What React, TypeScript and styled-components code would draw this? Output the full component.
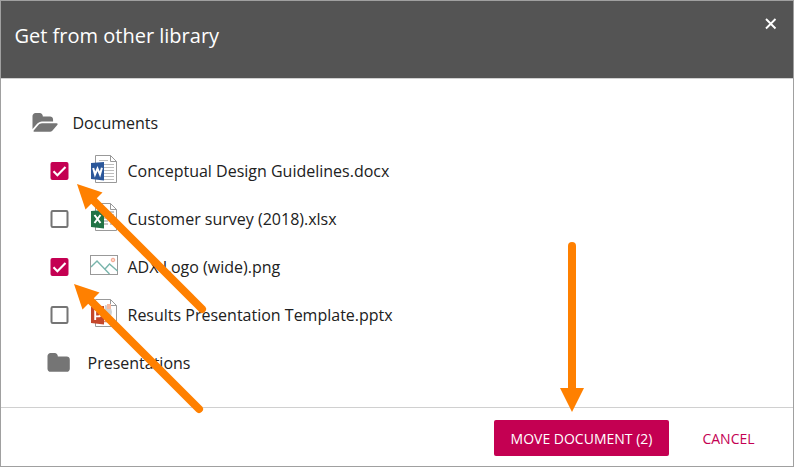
import React from "react";
import styled, { createGlobalStyle } from "styled-components";

const GlobalStyle = createGlobalStyle`
  * { box-sizing: border-box; }
  body { margin: 0; background: #fff; }
`;

const Dialog = styled.div`
  position: relative;
  display: flex;
  flex-direction: column;
  width: 794px;
  height: 467px;
  border: 1px solid #a0a0a0;
  background: #fff;
  color: #212121;
  font-family: "Open Sans", sans-serif;
  font-size: 16px;
  overflow: hidden;
`;

const Header = styled.header`
  display: flex;
  justify-content: space-between;
  align-items: flex-start;
  height: 78px;
  flex: none;
  padding: 16px 16px 0 13.5px;
  background: #545454;
  border-bottom: 1px solid #d0d0d0;
  color: #fff;
`;

const Title = styled.h1`
  margin: 5px 0 0;
  font-size: 20px;
  font-weight: 400;
  line-height: 28px;
`;

const CloseButton = styled.button`
  display: flex;
  margin: 0;
  padding: 0;
  border: 0;
  background: none;
  color: inherit;
`;

const Tree = styled.main`
  flex: 1;
  padding-top: 20px;
`;

const Row = styled.div<{ $indent: number }>`
  display: flex;
  align-items: center;
  height: 48px;
  padding-left: ${(p) => p.$indent}px;
  white-space: nowrap;
`;

const IconSlot = styled.span<{ $width: number; $lift?: number }>`
  display: flex;
  flex: none;
  width: ${(p) => p.$width}px;
  padding-bottom: ${(p) => (p.$lift ?? 0) * 2}px;
`;

const Label = styled.span`
  line-height: 24px;
`;

const Footer = styled.footer`
  display: flex;
  align-items: flex-start;
  justify-content: flex-end;
  gap: 17px;
  height: 59px;
  flex: none;
  padding: 12px 22px 0 0;
  border-top: 1px solid #d0d0d0;
`;

const Button = styled.button<{ $primary?: boolean }>`
  height: 36px;
  width: ${(p) => (p.$primary ? 175 : 85)}px;
  padding: 1px 0 0;
  border: 0;
  border-radius: 2px;
  background: ${(p) => (p.$primary ? "#c40052" : "transparent")};
  color: ${(p) => (p.$primary ? "#fff" : "#c40052")};
  font: 400 14px "Open Sans", sans-serif;
  white-space: nowrap;
`;

const Annotations = styled.svg`
  position: absolute;
  left: -1px;
  top: -1px;
  pointer-events: none;
`;

const FolderOpen = () => (
  <svg width="27" height="20" viewBox="-37 128 2016 1493" fill="#757575">
    <path d="M1879 952q0 31-31 66l-336 396q-43 51-120.500 86.500t-143.500 35.500h-1088q-34 0-60.500-13t-26.500-43q0-31 31-66l336-396q43-51 120.500-86.500t143.500-35.500h1088q34 0 60.500 13t26.500 43zm-343-344v160h-832q-94 0-197 47.500t-164 119.500l-337 396-5 6q0-4-.5-12.500t-.5-12.500v-960q0-92 66-158t158-66h320q92 0 158 66t66 158v32h544q92 0 158 66t66 158z" />
  </svg>
);

const Folder = () => (
  <svg width="24" height="20" viewBox="-37 128 1792 1493" fill="#757575">
    <path d="M1664 608v704q0 92-66 158t-158 66h-1216q-92 0-158-66t-66-158v-960q0-92 66-158t158-66h320q92 0 158 66t66 158v32h672q92 0 158 66t66 158z" />
  </svg>
);

const Checkbox = ({ checked }: { checked: boolean }) => (
  <svg width="19" height="18" viewBox="-.5 0 19 18" fill="none">
    {checked ? (
      <>
        <rect width="18" height="18" rx="2" fill="#c40052" />
        <path d="M3 9.300 6.900 13.200 15 5" stroke="#fff" strokeWidth="2.100" />
      </>
    ) : (
      <rect x="1" y="1" width="16" height="16" rx="1.200" stroke="#757575" strokeWidth="2" />
    )}
  </svg>
);

type Kind = "word" | "excel" | "image" | "powerpoint";

const officeColor = { word: "#2b579a", excel: "#217346", powerpoint: "#c4472b" };

const OfficeIcon = ({ kind }: { kind: Exclude<Kind, "image"> }) => (
  <svg width="28" height="30" viewBox="0 0 28 30" fill="none">
    <path d="M5.500 1.500h15l6 6v21h-21z" fill="#fff" stroke="#999" />
    <path d="M20.500 1.500v6h6" stroke="#999" />
    {kind === "word" && (
      <path d="M9 6.500h9M14 10.500h10M14 13.500h10M14 16.500h10M14 19.500h10M14 22.500h10M9 25.500h15" stroke="#bdbdbd" />
    )}
    {kind === "excel" && (
      <path d="M14 10h4M20 10h4M14 13h4M20 13h4M14 16h4M20 16h4M14 19h4M20 19h4M14 22h4M20 22h4" stroke="#b5b5b5" strokeWidth="1.400" />
    )}
    {kind === "powerpoint" && (
      <>
        <path d="M15 7a7 7 0 0 1 7 7 7 7 0 0 1-8 7z" fill="#d0d0d0" />
        <path d="M17 6h4v5h-4z" fill="#f8b9a0" />
        <path d="M14 23.500h10" stroke="#e08a70" strokeWidth="1.500" />
      </>
    )}
    <path d="M1 9 14 8v18.500L1 25z" fill={officeColor[kind]} />
    {kind === "word" && <path d="m3.200 14 1.800 6.500 2.500-6 2.500 6 1.900-6.700" stroke="#fff" strokeWidth="2" />}
    {kind === "excel" && <path d="m4.500 13 6 8M10.500 13l-6 8" stroke="#fff" strokeWidth="2" />}
    {kind === "powerpoint" && <path d="M5.200 22v-9h3q2.600 0 2.600 2.700t-2.600 2.700h-3" stroke="#fff" strokeWidth="1.900" />}
  </svg>
);

const ImageIcon = () => (
  <svg width="28" height="20" viewBox="0 0 28 20" fill="none">
    <rect x=".5" y=".5" width="27" height="19" fill="#fff" stroke="#999" />
    <path d="m1 12 6-6 12.500 13M15 14l4.500-5 8 7" stroke="#79b5ac" strokeWidth="1.400" />
    <circle cx="23" cy="5" r="1.800" fill="#ffd5c4" stroke="#f4a58e" />
  </svg>
);

const files: { name: string; kind: Kind; checked: boolean }[] = [
  { name: "Conceptual Design Guidelines.docx", kind: "word", checked: true },
  { name: "Customer survey (2018).xlsx", kind: "excel", checked: false },
  { name: "ADX Logo (wide).png", kind: "image", checked: true },
  { name: "Results Presentation Template.pptx", kind: "powerpoint", checked: false },
];

const DiagonalArrow = ({ x, y, length }: { x: number; y: number; length: number }) => (
  <g transform={`translate(${x} ${y})`}>
    <path d="M0 0 25.500 8.500 8.500 25.500z" fill="#ff8000" />
    <path d={`M14 14 ${length} ${length}`} stroke="#ff8000" strokeWidth="8" strokeLinecap="round" />
  </g>
);

export default function App() {
  return (
    <>
      <GlobalStyle />
      <Dialog>
        <Header>
          <Title>Get from other library</Title>
          <CloseButton aria-label="Close">
            <svg width="13" height="13" viewBox="0 0 13 13" stroke="#fff" strokeWidth="1.900">
              <path d="m2 2 9.500 9.500M11.500 2 2 11.500" />
            </svg>
          </CloseButton>
        </Header>
        <Tree>
          <Row $indent={31}>
            <IconSlot $width={40.500}><FolderOpen /></IconSlot>
            <Label>Documents</Label>
          </Row>
          {files.map((file) => (
            <Row key={file.name} $indent={49}>
              <IconSlot $width={40}><Checkbox checked={file.checked} /></IconSlot>
              <IconSlot $width={37.500} $lift={2}>
                {file.kind === "image" ? <ImageIcon /> : <OfficeIcon kind={file.kind} />}
              </IconSlot>
              <Label>{file.name}</Label>
            </Row>
          ))}
          <Row $indent={46}>
            <IconSlot $width={40.500}><Folder /></IconSlot>
            <Label>Presentations</Label>
          </Row>
        </Tree>
        <Footer>
          <Button $primary>MOVE DOCUMENT (2)</Button>
          <Button>CANCEL</Button>
        </Footer>
        <Annotations width="794" height="467" viewBox="0 0 794 467">
          <DiagonalArrow x={77} y={184} length={125} />
          <DiagonalArrow x={74} y={284} length={125} />
          <path d="M572 246v145" stroke="#ff8000" strokeWidth="8" strokeLinecap="round" />
          <path d="M560 388h24l-12 24z" fill="#ff8000" />
        </Annotations>
      </Dialog>
    </>
  );
}
